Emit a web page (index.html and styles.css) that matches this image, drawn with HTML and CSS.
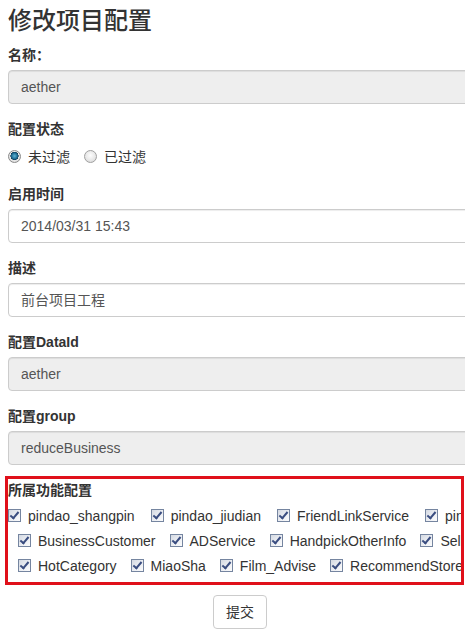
FILE: index.html
```html
<!DOCTYPE html>
<html lang="zh">
<head>
<meta charset="utf-8">
<title>修改项目配置</title>
<link rel="stylesheet" href="styles.css">
</head>
<body>
<div class="page">
  <h3 class="title">修改项目配置</h3>
  <form class="form">
    <div class="group">
      <label class="label">名称：</label>
      <div class="control disabled">aether</div>
    </div>
    <div class="group">
      <label class="label">配置状态</label>
      <div class="radios">
        <span class="radio-item"><span class="radio checked"></span>未过滤</span>
        <span class="radio-item"><span class="radio"></span>已过滤</span>
      </div>
    </div>
    <div class="group">
      <label class="label">启用时间</label>
      <div class="control">2014/03/31 15:43</div>
    </div>
    <div class="group">
      <label class="label">描述</label>
      <div class="control">前台项目工程</div>
    </div>
    <div class="group">
      <label class="label">配置DataId</label>
      <div class="control disabled">aether</div>
    </div>
    <div class="group last">
      <label class="label">配置group</label>
      <div class="control disabled">reduceBusiness</div>
    </div>
    <div class="features">
      <label class="label">所属功能配置</label>
      <div class="cb-row first">
        <span class="cb-item"><span class="cb"></span>pindao_shangpin</span>
        <span class="cb-item"><span class="cb"></span>pindao_jiudian</span>
        <span class="cb-item"><span class="cb"></span>FriendLinkService</span>
        <span class="cb-item"><span class="cb"></span>pindao_tuangou</span>
      </div>
      <div class="cb-row wrapped">
        <span class="cb-item"><span class="cb"></span>BusinessCustomer</span>
        <span class="cb-item"><span class="cb"></span>ADService</span>
        <span class="cb-item"><span class="cb"></span>HandpickOtherInfo</span>
        <span class="cb-item"><span class="cb"></span>SellerInfo</span>
      </div>
      <div class="cb-row wrapped">
        <span class="cb-item"><span class="cb"></span>HotCategory</span>
        <span class="cb-item"><span class="cb"></span>MiaoSha</span>
        <span class="cb-item"><span class="cb"></span>Film_Advise</span>
        <span class="cb-item"><span class="cb"></span>RecommendStore</span>
      </div>
    </div>
    <div class="actions">
      <button type="button" class="btn">提交</button>
    </div>
  </form>
</div>
</body>
</html>
```
FILE: styles.css
```css
html, body {
  margin: 0;
  padding: 0;
  overflow: hidden;
  background: #fff;
}
body {
  font-family: "Liberation Sans", "Noto Sans CJK SC", sans-serif;
  font-size: 14px;
  line-height: 20px;
  color: #333;
}
.page {
  padding: 0 8px;
  width: 560px;
}
.title {
  margin: 0;
  padding-top: 6px;
  font-size: 24px;
  font-weight: 500;
  line-height: 30px;
  height: 45px;
  box-sizing: border-box;
}
.group {
  margin-bottom: 15px;
}
.group.last {
  margin-bottom: 11px;
}
.label {
  display: block;
  font-weight: bold;
  margin-bottom: 5px;
  line-height: 20px;
}
.control {
  box-sizing: border-box;
  height: 34px;
  width: 100%;
  padding: 6px 12px;
  border: 1px solid #ccc;
  border-radius: 4px;
  color: #555;
  background: #fff;
  box-shadow: inset 0 1px 1px rgba(0, 0, 0, 0.075);
  white-space: nowrap;
}
.control.disabled {
  background: #eee;
}
.radios {
  display: flex;
  align-items: center;
  height: 25px;
}
.radio-item {
  display: inline-flex;
  align-items: center;
  margin-right: 14px;
}
.radio {
  box-sizing: border-box;
  width: 13px;
  height: 13px;
  margin-right: 7px;
  border-radius: 50%;
  border: 1px solid #a0a0a0;
  background: radial-gradient(circle at 50% 40%, #fdfdfd 0%, #e6e6e6 60%, #cfcfcf 100%);
}
.radio.checked {
  border-color: #8a8a8a;
  background:
    radial-gradient(circle at 50% 45%, #5fb3d4 0%, #1f6f96 35%, #0e3c58 48%, rgba(0,0,0,0) 52%),
    radial-gradient(circle at 50% 40%, #fdfdfd 0%, #e2e2e2 70%, #c8c8c8 100%);
}
.features {
  box-sizing: border-box;
  width: 459px;
  margin-left: -3px;
  border: 3px solid #e0101a;
  padding: 1px 0 4px 0;
  overflow: hidden;
}
.features .label {
  margin: 0 0 3px 0;
}
.cb-row {
  display: flex;
  align-items: center;
  height: 25px;
  white-space: nowrap;
  gap: 14px;
}
.cb-row.first {
  gap: 16px;
}
.cb-row.wrapped {
  padding-left: 10px;
}
.cb-item {
  display: inline-flex;
  align-items: center;
  flex: none;
}
.cb {
  position: relative;
  box-sizing: border-box;
  width: 13px;
  height: 13px;
  margin-right: 7px;
  border: 1px solid #7585a0;
  background: linear-gradient(135deg, #d4d9e2 0%, #eef0f4 60%, #fbfbfc 100%);
}
.cb::after {
  content: "";
  position: absolute;
  left: 3px;
  top: 0px;
  width: 3px;
  height: 7px;
  border-right: 2px solid #3a4d80;
  border-bottom: 2px solid #3a4d80;
  transform: rotate(40deg);
}
.actions {
  width: 464px;
  text-align: center;
  margin-top: 10px;
}
.btn {
  font-family: "Liberation Sans", "Noto Sans CJK SC", sans-serif;
  font-size: 14px;
  line-height: 20px;
  padding: 6px 12px;
  color: #333;
  background: #fff;
  border: 1px solid #ccc;
  border-radius: 4px;
  height: 34px;
}
```
